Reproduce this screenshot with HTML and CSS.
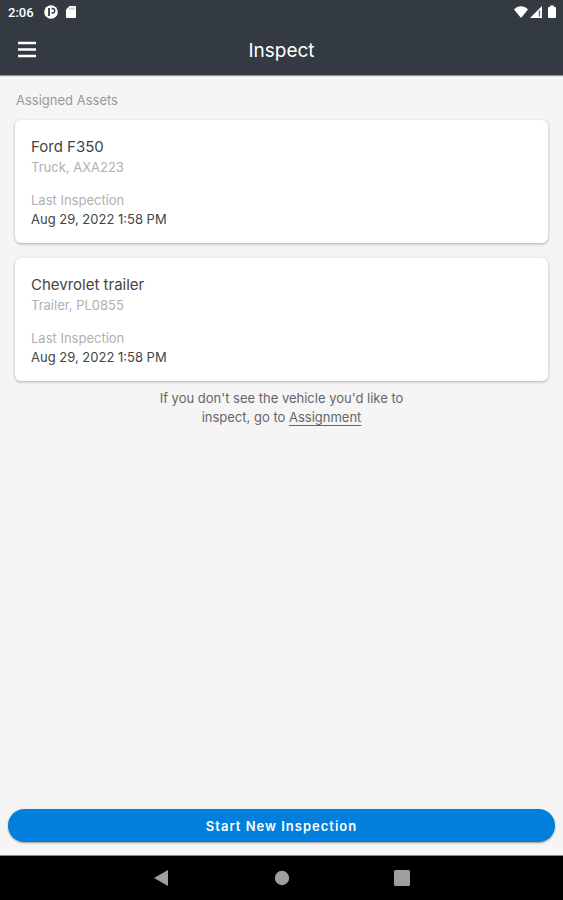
FILE: index.html
```
<!DOCTYPE html>
<html lang="en">
<head>
    <meta charset="UTF-8">
    <meta name="viewport" content="width=device-width, initial-scale=1.0">
    <title>Inspect</title>
    <link rel="stylesheet" href="styles.css">
</head>
<body>

    <div class="status-bar">
        <span class="clock">2:06</span>
        <svg class="status-app" width="14" height="14" viewBox="0 0 14 14">
            <circle cx="7" cy="7" r="6.8" fill="#fff"/>
            <path d="M5 3v8" fill="none" stroke="#343a42" stroke-width="1.800"/>
            <path d="M7.500 3.500H8.500a1.800 1.800 0 0 1 0 4.500H7.500" fill="none" stroke="#343a42" stroke-width="1.300"/>
        </svg>
        <svg class="status-card" width="12" height="14" viewBox="0 0 12 14">
            <path d="M4.500 1H10a1 1 0 0 1 1 1v10a1 1 0 0 1-1 1H2a1 1 0 0 1-1-1V4.500z" fill="#fff"/>
            <path d="M5 2.500v2M7 2.500v2M9 2.500v2" stroke="#9a9da1" stroke-width="1"/>
        </svg>
        <div class="status-right">
            <svg width="16" height="14" viewBox="0 0 16 14">
                <path d="M1 4.500C5 .2 11 .2 15 4.500L8 13z" fill="#fff"/>
            </svg>
            <svg width="14" height="14" viewBox="0 0 14 14">
                <path d="M13 1v12H1z" fill="#fff"/>
                <path d="M10.500 5.500v6" stroke="#6d7278" stroke-width="1.500"/>
            </svg>
            <svg class="battery" width="10" height="14" viewBox="0 0 10 14">
                <path d="M3 .5h4V2h1a1 1 0 0 1 1 1v9a1 1 0 0 1-1 1H2a1 1 0 0 1-1-1V3a1 1 0 0 1 1-1h1z" fill="#fff"/>
            </svg>
        </div>
    </div>

    <header class="header">
        <button class="menu-btn" aria-label="Menu">
            <svg width="18" height="18" viewBox="0 0 18 18">
                <path d="M0 2h18M0 8.500h18M0 15h18" stroke="#fff" stroke-width="2.500"/>
            </svg>
        </button>
        <h1>Inspect</h1>
    </header>

    <main class="content">
        <h2 class="section-title">Assigned Assets</h2>

        <div class="card">
            <h3>Ford F350</h3>
            <p class="card-type">Truck, AXA223</p>
            <p class="card-label">Last Inspection</p>
            <p class="card-date">Aug 29, 2022 1:58 PM</p>
        </div>

        <div class="card">
            <h3>Chevrolet trailer</h3>
            <p class="card-type">Trailer, PL0855</p>
            <p class="card-label">Last Inspection</p>
            <p class="card-date">Aug 29, 2022 1:58 PM</p>
        </div>

        <p class="hint">If you don't see the vehicle you'd like to inspect, go to <a href="#">Assignment</a></p>
    </main>

    <div class="actions">
        <button class="start-btn">Start New Inspection</button>
    </div>

    <nav class="nav-bar">
        <button aria-label="Back">
            <svg width="16" height="16" viewBox="0 0 16 16"><path d="M14 0v16L0 8z" fill="#9e9e9e"/></svg>
        </button>
        <button aria-label="Home">
            <svg width="16" height="16" viewBox="0 0 16 16"><circle cx="8" cy="8" r="7.200" fill="#9e9e9e"/></svg>
        </button>
        <button aria-label="Recent apps">
            <svg width="16" height="16" viewBox="0 0 16 16"><rect width="16" height="16" rx="1.500" fill="#9e9e9e"/></svg>
        </button>
    </nav>

</body>
</html>
```
FILE: styles.css
```
* {
    box-sizing: border-box;
}

body {
    margin: 0;
    min-height: 100vh;
    display: flex;
    flex-direction: column;
    background: #f5f5f5;
    font-family: Inter, "Liberation Sans", sans-serif;
    font-size: 13px;
    color: #444;
}

h1, h2, h3, p {
    margin: 0;
    font-weight: 400;
}

button {
    padding: 0;
    border: none;
    background: none;
    font-family: inherit;
    cursor: pointer;
}

svg {
    display: block;
}

.status-bar {
    display: flex;
    align-items: center;
    height: 24px;
    padding: 0 6px 0 8px;
    background: #343a42;
    color: #fff;
}

.clock {
    font-family: Roboto, sans-serif;
    font-size: 13px;
    font-weight: 500;
}

.status-app {
    margin-left: 10px;
}

.status-card {
    margin-left: 7px;
}

.status-right {
    display: flex;
    margin-left: auto;
}

.battery {
    margin-left: 4px;
}

.header {
    display: grid;
    grid-template-columns: 36px 1fr 36px;
    align-items: center;
    height: 51px;
    padding: 1px 18px 0;
    background: #343a42;
    color: #fff;
    box-shadow: 0 1px 1px rgba(0, 0, 0, 0.4);
}

.header h1 {
    font-size: 19px;
    text-align: center;
}

.content {
    flex: 1;
    padding: 15px;
}

.section-title {
    margin: 0 1px 10px;
    font-size: 13px;
    line-height: 20px;
    color: #999;
}

.card {
    margin-bottom: 15px;
    padding: 16px 16px 14px;
    background: #fff;
    border-radius: 6px;
    box-shadow: 0 1px 3px rgba(0, 0, 0, 0.3);
}

.card h3 {
    font-size: 15px;
    line-height: 22px;
}

.card-type {
    margin-bottom: 14px;
    line-height: 19px;
    color: #b0b0b0;
}

.card-label {
    line-height: 19px;
    color: #b0b0b0;
}

.card-date {
    line-height: 19px;
}

.hint {
    max-width: 260px;
    margin: -7px auto 0;
    line-height: 19px;
    text-align: center;
    color: #666;
}

.hint a {
    color: inherit;
    text-underline-offset: 3px;
}

.actions {
    padding: 8px 8px 14px;
}

.start-btn {
    display: block;
    width: 100%;
    height: 33px;
    border-radius: 17px;
    background: #0080dc;
    color: #fff;
    font-size: 13px;
    font-weight: 600;
    letter-spacing: 1px;
    box-shadow: 0 1px 2px rgba(0, 0, 0, 0.4);
}

.nav-bar {
    display: flex;
    justify-content: center;
    align-items: center;
    gap: 104px;
    height: 44px;
    background: #000;
    box-shadow: 0 -1px 0 #888;
}
```
